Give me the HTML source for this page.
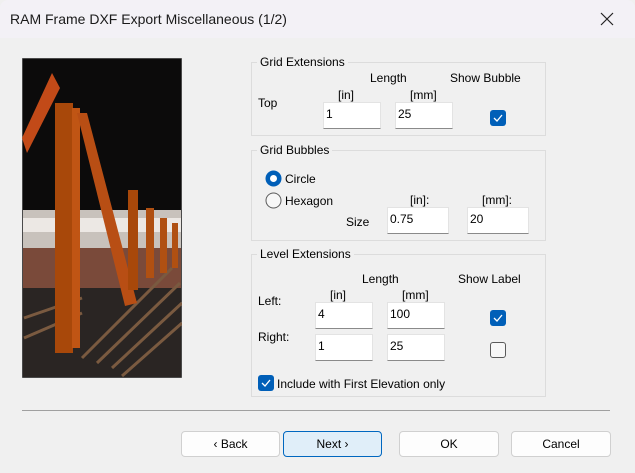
<!DOCTYPE html>
<html><head><meta charset="utf-8"><style>
*{margin:0;padding:0;box-sizing:border-box}
body{width:635px;height:473px;background:#f0f0f0;font-family:"Liberation Sans",sans-serif;font-size:12px;color:#000;position:relative;overflow:hidden}
.a{position:absolute;white-space:nowrap}
.title{position:absolute;left:0;top:0;width:635px;height:38px;background:#f3f1f6;border-radius:8px 8px 0 0}
.grp{position:absolute;border:1px solid #dcdcdc}
.lg{position:absolute;background:#f0f0f0;padding:0 3px;top:-8px;left:5px;font-size:12px}
.in{position:absolute;background:#fff;border:1px solid #e3e3e3;border-bottom:1px solid #8a8a8a;padding:4px 0 0 2px;font-size:12px}
.cb{position:absolute;width:16px;height:16px;border-radius:3px;background:#005fb8}
.cb svg{position:absolute;left:3px;top:4px}
.cbu{position:absolute;width:16px;height:16px;border-radius:3px;border:1px solid #5a5a5a;background:#f7f7f7}
.btn{position:absolute;top:431px;height:26px;border:1px solid #d0d0d0;border-radius:4px;background:#fdfdfd;text-align:center;line-height:24px;font-size:12px}
</style></head><body>
<div class="title"></div>
<div class="a" style="left:10px;top:11px;font-size:14px;color:#1a1a1a">RAM Frame DXF Export Miscellaneous (1/2)</div>
<svg class="a" style="left:600px;top:12px" width="14" height="14"><path d="M1 1L13 13M13 1L1 13" stroke="#222" stroke-width="1.2"/></svg>

<svg class="a" style="left:22px;top:58px" width="160" height="320" viewBox="0 0 160 320">
<rect width="160" height="320" fill="#0c0b0b"/>
<rect x="0" y="0" width="160" height="320" fill="none" stroke="#888"/>
<rect x="1" y="152" width="158" height="40" fill="#c8c2bc"/>
<rect x="1" y="160" width="158" height="14" fill="#ece8e4"/>
<rect x="1" y="190" width="158" height="40" fill="#7a4a3a"/>
<rect x="1" y="230" width="158" height="89" fill="#2a2523"/>
<g stroke="#7a5a40" stroke-width="3"><path d="M60 300L150 210M75 305L158 225M90 310L160 245M100 318L160 265M2 260L60 240M2 280L60 255"/></g>
<path d="M0 80L30 15L38 30L5 95Z" fill="#c24a18"/>
<rect x="33" y="45" width="18" height="250" fill="#a8480a"/>
<rect x="50" y="50" width="8" height="240" fill="#c05514"/>
<path d="M55 55L65 55L115 245L103 248Z" fill="#b84e14"/>
<rect x="106" y="132" width="10" height="100" fill="#a8480a"/>
<rect x="124" y="150" width="8" height="70" fill="#b05012"/>
<rect x="138" y="160" width="7" height="55" fill="#b05012"/>
<rect x="150" y="165" width="6" height="45" fill="#b05012"/>
</svg>

<div class="grp" style="left:251px;top:62px;width:295px;height:74px"><div class="lg">Grid Extensions</div></div>
<div class="a" style="left:370px;top:71px">Length</div>
<div class="a" style="left:450px;top:71px">Show Bubble</div>
<div class="a" style="left:258px;top:96px">Top</div>
<div class="a" style="left:338px;top:88px">[in]</div>
<div class="a" style="left:410px;top:88px">[mm]</div>
<div class="in" style="left:323px;top:102px;width:58px;height:27px">1</div>
<div class="in" style="left:395px;top:102px;width:58px;height:27px">25</div>
<div class="cb" style="left:490px;top:110px"><svg width="10" height="8"><path d="M1 4L4 7L9 1" stroke="#fff" stroke-width="1.3" fill="none"/></svg></div>

<div class="grp" style="left:251px;top:150px;width:295px;height:91px"><div class="lg">Grid Bubbles</div></div>
<svg class="a" style="left:265px;top:170px" width="17" height="17"><circle cx="8.5" cy="8.5" r="8" fill="#005fb8"/><circle cx="8.5" cy="8.5" r="3.5" fill="#fff"/></svg>
<div class="a" style="left:285px;top:172px">Circle</div>
<svg class="a" style="left:265px;top:192px" width="17" height="17"><circle cx="8.5" cy="8.5" r="7.5" fill="#f7f7f7" stroke="#5a5a5a"/></svg>
<div class="a" style="left:285px;top:194px">Hexagon</div>
<div class="a" style="left:410px;top:193px">[in]:</div>
<div class="a" style="left:482px;top:193px">[mm]:</div>
<div class="a" style="left:346px;top:215px">Size</div>
<div class="in" style="left:387px;top:207px;width:62px;height:27px">0.75</div>
<div class="in" style="left:467px;top:207px;width:62px;height:27px">20</div>

<div class="grp" style="left:251px;top:254px;width:295px;height:143px"><div class="lg">Level Extensions</div></div>
<div class="a" style="left:362px;top:272px">Length</div>
<div class="a" style="left:458px;top:272px">Show Label</div>
<div class="a" style="left:258px;top:294px">Left:</div>
<div class="a" style="left:330px;top:288px">[in]</div>
<div class="a" style="left:402px;top:288px">[mm]</div>
<div class="in" style="left:315px;top:302px;width:58px;height:27px">4</div>
<div class="in" style="left:387px;top:302px;width:58px;height:27px">100</div>
<div class="a" style="left:258px;top:330px">Right:</div>
<div class="in" style="left:315px;top:334px;width:58px;height:27px">1</div>
<div class="in" style="left:387px;top:334px;width:58px;height:27px">25</div>
<div class="cb" style="left:490px;top:310px"><svg width="10" height="8"><path d="M1 4L4 7L9 1" stroke="#fff" stroke-width="1.3" fill="none"/></svg></div>
<div class="cbu" style="left:490px;top:342px"></div>
<div class="cb" style="left:258px;top:375px"><svg width="10" height="8"><path d="M1 4L4 7L9 1" stroke="#fff" stroke-width="1.3" fill="none"/></svg></div>
<div class="a" style="left:277px;top:377px">Include with First Elevation only</div>

<div class="a" style="left:22px;top:410px;width:588px;height:1px;background:#a0a0a0"></div>
<div class="btn" style="left:181px;width:99px">‹ Back</div>
<div class="btn" style="left:283px;width:99px;background:#e0eef9;border-color:#0067c0">Next ›</div>
<div class="btn" style="left:399px;width:100px">OK</div>
<div class="btn" style="left:511px;width:100px">Cancel</div>
</body></html>
